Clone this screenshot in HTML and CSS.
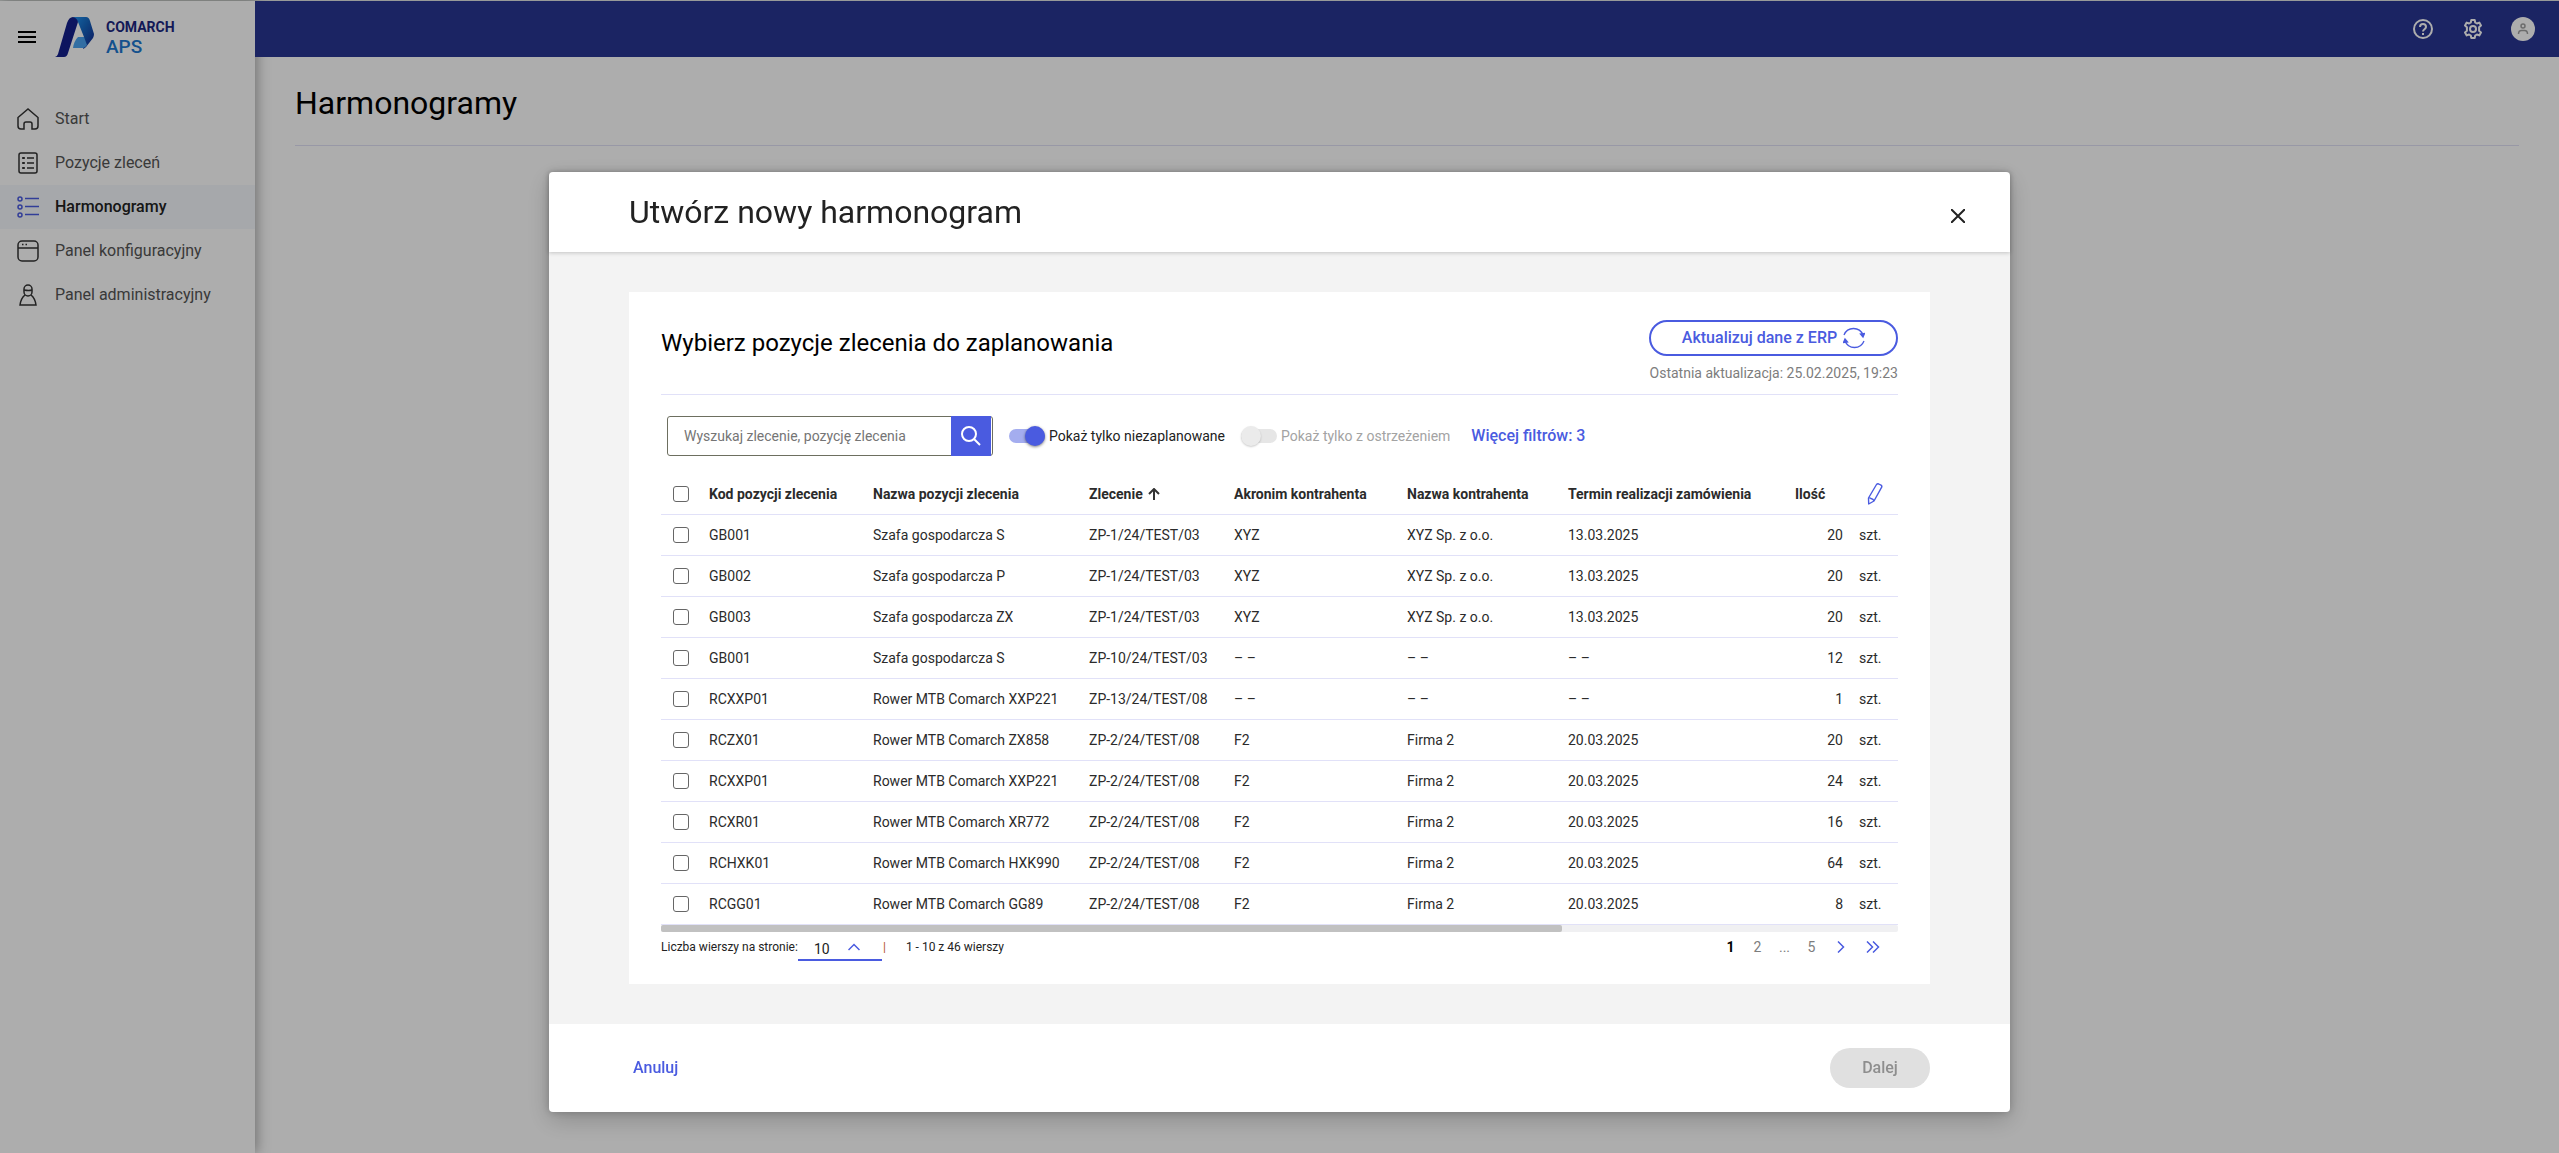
FILE: index.html
```html
<!DOCTYPE html>
<html lang="pl">
<head>
<meta charset="utf-8">
<meta name="viewport" content="width=device-width, initial-scale=1">
<title>Comarch APS – Harmonogramy</title>
<link rel="stylesheet" href="styles.css">
</head>
<body>
<div class="app">
  <aside class="sidebar">
    <div class="brand">
      <button class="icon-button" type="button" aria-label="Menu">
        <svg width="18" height="12" viewBox="0 0 18 12"><path d="M0 1h18M0 6h18M0 11h18" stroke="#000" stroke-width="2"/></svg>
      </button>
      <svg class="brand-mark" width="40" height="40" viewBox="0 0 40 40">
        <defs><linearGradient id="band" x1="0" y1="0" x2="1" y2="1"><stop offset="0" stop-color="#2196f3"/><stop offset=".45" stop-color="#1565c0"/><stop offset="1" stop-color="#14248c"/></linearGradient></defs>
        <path d="M18 0h13q3 0 4 4l4 13q0 2-1 4l-7 9q-1 1-3 2l1-12-6-15z" fill="url(#band)"/>
        <path d="M23 20h6l3 8q-2 3-4 3H18q1-7 5-11z" fill="#4aa3f0"/>
        <path d="M18 0q-4 0-6 6L3 37q-1 3-3 3h9q3 0 4-4l10-31Q22 1 18 0z" fill="#14208c"/>
      </svg>
      <div class="brand-name"><span class="brand-company">COMARCH</span><span class="brand-product">APS</span></div>
    </div>
    <nav class="menu">
      <a class="menu-item" href="#start">
        <svg class="menu-icon" viewBox="0 0 22 22"><path d="M1 9.500 11 1l10 8.500V18q0 3-3 3h-3v-5q0-2-2-2H9q-2 0-2 2v5H4q-3 0-3-3z"/></svg>Start</a>
      <a class="menu-item" href="#pozycje">
        <svg class="menu-icon" viewBox="0 0 22 22"><rect x="2" y="1" width="18" height="20" rx="2"/><path d="M10 6h7M10 11h7M10 16h7M5 6h3M5 11h3M5 16h3"/><path d="M6.500 5v2M6.500 10v2M6.500 15v2"/></svg>Pozycje zleceń</a>
      <a class="menu-item menu-item-active" href="#harmonogramy" aria-current="page">
        <svg class="menu-icon" viewBox="0 0 22 22"><circle cx="3" cy="3" r="2"/><circle cx="3" cy="11" r="2"/><circle cx="3" cy="19" r="2"/><path d="M8 2.500h14M8 10.500h14M8 18.500h14"/></svg>Harmonogramy</a>
      <a class="menu-item" href="#konfiguracja">
        <svg class="menu-icon" viewBox="0 0 22 22"><rect x="1" y="1" width="20" height="20" rx="4"/><path d="M1 8h20M5 4.500h1.500M8.500 4.500H10"/></svg>Panel konfiguracyjny</a>
      <a class="menu-item" href="#administracja">
        <svg class="menu-icon" viewBox="0 0 22 22"><rect x="7" y="1" width="8" height="11" rx="4"/><path d="M7 6q5 1 8 0M8 11q-4 3-5 10h16q-1-7-5-10"/></svg>Panel administracyjny</a>
    </nav>
  </aside>
  <div class="main">
    <header class="topbar">
      <button class="icon-button" type="button" aria-label="Pomoc">
        <svg width="20" height="20" viewBox="0 0 20 20" fill="none" stroke="#fff" stroke-width="2"><circle cx="10" cy="10" r="9"/><path d="M7 8q0-3 3-3t3 3q0 1-1.500 2.200T10 12.500"/><path d="M10 14v2"/></svg>
      </button>
      <button class="icon-button" type="button" aria-label="Ustawienia">
        <svg width="20" height="20" viewBox="0 0 20 20" fill="none" stroke="#fff" stroke-width="2" stroke-linejoin="round"><circle cx="10" cy="10" r="3"/><path d="M8.300 1h3.400l.5 2.500 1.700 1 2.400-.9L18 6.500l-1.900 1.700v3.600L18 13.500l-1.700 2.900-2.400-.9-1.700 1-.5 2.500H8.300l-.5-2.500-1.700-1-2.400.9L2 13.500l1.900-1.700V8.200L2 6.500l1.700-2.900 2.400.9 1.700-1z"/></svg>
      </button>
      <button class="icon-button avatar" type="button" aria-label="Konto">
        <svg width="12" height="12" viewBox="0 0 12 12" fill="none" stroke="#a0a0a0" stroke-width="1.500"><circle cx="6" cy="3" r="2"/><path d="M1.500 11q0-3.500 3-3.500h3q3 0 3 3.500"/></svg>
      </button>
    </header>
    <main class="content"><h1 class="page-title">Harmonogramy</h1></main>
  </div>
</div>

<div class="overlay">
  <section class="dialog" role="dialog" aria-modal="true" aria-labelledby="dialog-title">
    <header class="dialog-header">
      <h2 class="dialog-title" id="dialog-title">Utwórz nowy harmonogram</h2>
      <button class="icon-button dialog-close" type="button" aria-label="Zamknij">
        <svg width="14" height="14" viewBox="0 0 14 14"><path d="m0 0 14 14M14 0 0 14" stroke="#222" stroke-width="2"/></svg>
      </button>
    </header>
    <div class="dialog-body">
      <div class="card">
        <div class="card-header">
          <h3 class="card-title">Wybierz pozycje zlecenia do zaplanowania</h3>
          <div class="sync">
            <button class="sync-button" type="button">Aktualizuj dane z ERP
              <svg width="22" height="22" viewBox="0 0 22 22" fill="none" stroke="#4a5be0" stroke-width="1.300"><path d="M1 8a10.200 10.200 0 0 1 19 0M21 14a10.200 10.200 0 0 1-19 0"/><path d="m17.500 7 2.500 3 1.500-3.500zM4.500 15 2 12l-1.500 3.500z" fill="#4a5be0"/></svg>
            </button>
            <p class="sync-info">Ostatnia aktualizacja: 25.02.2025, 19:23</p>
          </div>
        </div>
        <div class="filters">
          <form class="search">
            <input class="search-input" type="text" placeholder="Wyszukaj zlecenie, pozycję zlecenia" aria-label="Wyszukaj zlecenie, pozycję zlecenia">
            <button class="search-button" type="button" aria-label="Szukaj">
              <svg width="20" height="20" viewBox="0 0 20 20" fill="none" stroke="#fff" stroke-width="2"><circle cx="8" cy="8" r="7"/><path d="m13 13 6 6"/></svg>
            </button>
          </form>
          <label class="toggle"><input class="switch" type="checkbox" role="switch" checked>Pokaż tylko niezaplanowane</label>
          <label class="toggle toggle-disabled"><input class="switch" type="checkbox" role="switch" disabled>Pokaż tylko z ostrzeżeniem</label>
          <button class="link-button" type="button">Więcej filtrów: 3</button>
        </div>
        <table class="orders">
          <colgroup><col class="col-check"><col class="col-code"><col class="col-name"><col class="col-order"><col class="col-acronym"><col class="col-client"><col class="col-date"><col class="col-amount"><col class="col-unit"></colgroup>
          <thead>
            <tr>
              <th class="check"><input class="box" type="checkbox" aria-label="Zaznacz wszystkie"></th>
              <th>Kod pozycji zlecenia</th><th>Nazwa pozycji zlecenia</th>
              <th aria-sort="ascending">Zlecenie <svg class="sort" width="12" height="12" viewBox="0 0 12 12" fill="none" stroke="#333" stroke-width="2"><path d="M6 12V1M1 6l5-5 5 5"/></svg></th>
              <th>Akronim kontrahenta</th><th>Nazwa kontrahenta</th><th>Termin realizacji zamówienia</th><th>Ilość</th>
              <th class="edit"><button class="icon-button" type="button" aria-label="Edytuj kolumny"><svg width="16" height="22" viewBox="0 0 16 22" fill="none" stroke="#4a5be0" stroke-width="1.400" stroke-linejoin="round"><path d="M9.500 1.500q1-1 2.200-.5l2.300 1.200q1.200.8.700 2L7 18l-5.300 3-.2-6zM1.500 15q2-.5 2.800.8Q6 15.500 7 18"/></svg></button></th>
            </tr>
          </thead>
          <tbody>
            <tr><td class="check"><input class="box" type="checkbox" aria-label="Zaznacz GB001"></td><td>GB001</td><td>Szafa gospodarcza S</td><td>ZP-1/24/TEST/03</td><td>XYZ</td><td>XYZ Sp. z o.o.</td><td>13.03.2025</td><td class="amount">20</td><td>szt.</td></tr>
            <tr><td class="check"><input class="box" type="checkbox" aria-label="Zaznacz GB002"></td><td>GB002</td><td>Szafa gospodarcza P</td><td>ZP-1/24/TEST/03</td><td>XYZ</td><td>XYZ Sp. z o.o.</td><td>13.03.2025</td><td class="amount">20</td><td>szt.</td></tr>
            <tr><td class="check"><input class="box" type="checkbox" aria-label="Zaznacz GB003"></td><td>GB003</td><td>Szafa gospodarcza ZX</td><td>ZP-1/24/TEST/03</td><td>XYZ</td><td>XYZ Sp. z o.o.</td><td>13.03.2025</td><td class="amount">20</td><td>szt.</td></tr>
            <tr><td class="check"><input class="box" type="checkbox" aria-label="Zaznacz GB001"></td><td>GB001</td><td>Szafa gospodarcza S</td><td>ZP-10/24/TEST/03</td><td>– –</td><td>– –</td><td>– –</td><td class="amount">12</td><td>szt.</td></tr>
            <tr><td class="check"><input class="box" type="checkbox" aria-label="Zaznacz RCXXP01"></td><td>RCXXP01</td><td>Rower MTB Comarch XXP221</td><td>ZP-13/24/TEST/08</td><td>– –</td><td>– –</td><td>– –</td><td class="amount">1</td><td>szt.</td></tr>
            <tr><td class="check"><input class="box" type="checkbox" aria-label="Zaznacz RCZX01"></td><td>RCZX01</td><td>Rower MTB Comarch ZX858</td><td>ZP-2/24/TEST/08</td><td>F2</td><td>Firma 2</td><td>20.03.2025</td><td class="amount">20</td><td>szt.</td></tr>
            <tr><td class="check"><input class="box" type="checkbox" aria-label="Zaznacz RCXXP01"></td><td>RCXXP01</td><td>Rower MTB Comarch XXP221</td><td>ZP-2/24/TEST/08</td><td>F2</td><td>Firma 2</td><td>20.03.2025</td><td class="amount">24</td><td>szt.</td></tr>
            <tr><td class="check"><input class="box" type="checkbox" aria-label="Zaznacz RCXR01"></td><td>RCXR01</td><td>Rower MTB Comarch XR772</td><td>ZP-2/24/TEST/08</td><td>F2</td><td>Firma 2</td><td>20.03.2025</td><td class="amount">16</td><td>szt.</td></tr>
            <tr><td class="check"><input class="box" type="checkbox" aria-label="Zaznacz RCHXK01"></td><td>RCHXK01</td><td>Rower MTB Comarch HXK990</td><td>ZP-2/24/TEST/08</td><td>F2</td><td>Firma 2</td><td>20.03.2025</td><td class="amount">64</td><td>szt.</td></tr>
            <tr><td class="check"><input class="box" type="checkbox" aria-label="Zaznacz RCGG01"></td><td>RCGG01</td><td>Rower MTB Comarch GG89</td><td>ZP-2/24/TEST/08</td><td>F2</td><td>Firma 2</td><td>20.03.2025</td><td class="amount">8</td><td>szt.</td></tr>
          </tbody>
        </table>
        <div class="scrollbar"><div class="scrollbar-thumb"></div></div>
        <div class="pager">
          <label class="pager-label" for="page-size">Liczba wierszy na stronie:</label>
          <div class="page-size">
            <select class="page-size-select" id="page-size"><option>10</option><option>20</option><option>50</option></select>
            <svg class="page-size-arrow" width="12" height="8" viewBox="0 0 12 8" fill="none" stroke="#4a5be0" stroke-width="1.500"><path d="m.5 7 5.500-5.500L11.500 7"/></svg>
          </div>
          <span class="pager-divider">|</span>
          <span class="pager-range">1 - 10 z 46 wierszy</span>
          <nav class="pages" aria-label="Strony">
            <a class="page page-current" href="#1" aria-current="page">1</a>
            <a class="page" href="#2">2</a>
            <span class="page">...</span>
            <a class="page" href="#5">5</a>
            <a class="page page-arrow" href="#next" aria-label="Następna"><svg width="8" height="12" viewBox="0 0 8 12" fill="none" stroke="#4a5be0" stroke-width="1.500"><path d="m1 .5 5.500 5.500L1 11.500"/></svg></a>
            <a class="page page-arrow" href="#last" aria-label="Ostatnia"><svg width="14" height="12" viewBox="0 0 14 12" fill="none" stroke="#4a5be0" stroke-width="1.500"><path d="m1 .5 5.500 5.500L1 11.500M7 .5 12.500 6 7 11.500"/></svg></a>
          </nav>
        </div>
      </div>
    </div>
    <footer class="dialog-footer">
      <button class="link-button" type="button">Anuluj</button>
      <button class="next-button" type="button" disabled>Dalej</button>
    </footer>
  </section>
</div>
</body>
</html>
```
FILE: styles.css
```css
*,
*::before,
*::after {
  box-sizing: border-box;
}

body {
  margin: 0;
  font-family: Roboto, "Liberation Sans", sans-serif;
  font-size: 14px;
  line-height: 20px;
  color: #2b2b2b;
  background: #fff;
}

h1, h2, h3, p {
  margin: 0;
  font-weight: 400;
}

svg {
  display: block;
  flex: none;
}

button, input, select {
  font: inherit;
  color: inherit;
}

button {
  padding: 0;
  border: 0;
  background: none;
  cursor: pointer;
}

.icon-button {
  display: flex;
  align-items: center;
  justify-content: center;
}

/* Application frame */
.app {
  display: flex;
  min-height: 100vh;
  border-top: 1px solid #e0e4e2;
}

.sidebar {
  flex: 0 0 255px;
  background: #fff;
  box-shadow: 2px 0 12px rgba(0, 0, 0, 0.35);
}

.brand {
  display: flex;
  align-items: center;
  padding: 16px 18px 0;
}

.brand-mark {
  margin: 0 11px 0 19px;
}

.brand-name {
  display: flex;
  flex-direction: column;
  font-weight: 700;
}

.brand-company {
  font-size: 14px;
  line-height: 20px;
  color: #1c2780;
}

.brand-product {
  font-size: 19px;
  line-height: 20px;
  font-weight: 500;
  color: #1e78d0;
}

.menu {
  display: flex;
  flex-direction: column;
  padding-top: 40px;
}

.menu-item {
  display: flex;
  align-items: center;
  gap: 16px;
  height: 44px;
  padding: 0 17px;
  font-size: 16px;
  color: #555;
  text-decoration: none;
}

.menu-item-active {
  font-weight: 500;
  color: #222;
  background: #f5f8fc;
}

.menu-icon {
  width: 22px;
  height: 22px;
  fill: none;
  stroke: #333;
  stroke-width: 1.5;
}

.menu-item-active .menu-icon {
  stroke: #4a5be0;
}

.main {
  flex: 1;
}

.topbar {
  position: relative;
  display: flex;
  align-items: center;
  justify-content: flex-end;
  gap: 26px;
  height: 56px;
  padding: 0 24px;
  background: #283593;
}

.topbar .icon-button {
  width: 24px;
  height: 24px;
}

.avatar {
  border-radius: 50%;
  background: #fff;
}

.content {
  padding: 0 40px;
}

.page-title {
  padding: 26px 0 22px;
  font-size: 32px;
  line-height: 40px;
  color: #000;
  border-bottom: 1px solid #e1e1f5;
}

/* Dialog */
.overlay {
  position: fixed;
  inset: 0;
  overflow: auto;
  padding: 172px 32px 40px;
  background: rgba(0, 0, 0, 0.32);
}

.dialog {
  max-width: 1461px;
  margin: 0 auto;
  border-radius: 4px;
  background: #fff;
  box-shadow: 0 8px 24px rgba(0, 0, 0, 0.2), 0 0 8px rgba(0, 0, 0, 0.2);
}

.dialog-header {
  position: relative;
  display: flex;
  justify-content: space-between;
  padding: 20px 28px 12px 80px;
  box-shadow: 0 1px 4px rgba(0, 0, 0, 0.2);
}

.dialog-title {
  font-size: 32px;
  line-height: 40px;
  color: #222;
}

.dialog-close {
  width: 48px;
  height: 48px;
}

.dialog-body {
  padding: 40px 80px;
  background: #f3f3f3;
}

.card {
  padding: 28px 32px 16px;
  background: #fff;
}

.card-header {
  display: flex;
  justify-content: space-between;
  padding-bottom: 11px;
  border-bottom: 1px solid #e1e1f8;
}

.card-title {
  font-size: 24px;
  line-height: 46px;
  color: #000;
}

.sync {
  min-width: 249px;
}

.sync-button {
  display: flex;
  align-items: center;
  justify-content: center;
  gap: 6px;
  width: 100%;
  height: 36px;
  border: 2px solid #4a5be0;
  border-radius: 18px;
  font-size: 16px;
  font-weight: 500;
  color: #4a5be0;
}

.sync-info {
  padding-top: 7px;
  text-align: right;
  color: #7d7d7d;
}

.filters {
  display: flex;
  align-items: center;
  padding: 21px 6px 17px;
}

.search {
  display: flex;
  width: 326px;
  height: 40px;
  padding-right: 1px;
  border: 1px solid #6d6f60;
  border-radius: 3px;
}

.search-input {
  flex: 1;
  min-width: 0;
  padding: 0 16px;
  border: 0;
  outline: 0;
  background: none;
}

.search-input::placeholder {
  color: #757575;
}

.search-button {
  display: flex;
  align-items: center;
  justify-content: center;
  width: 40px;
  margin: -1px 0;
  background: #4a5be0;
}

.toggle {
  display: flex;
  align-items: center;
  gap: 4px;
  margin-left: 16px;
  color: #222;
}

.toggle-disabled {
  color: #a3a3a3;
}

.switch {
  appearance: none;
  display: flex;
  align-items: center;
  width: 36px;
  height: 14px;
  margin: 0;
  border-radius: 7px;
  background: #e6e6e6;
}

.switch::before {
  content: "";
  width: 20px;
  height: 20px;
  border-radius: 50%;
  background: #ebebeb;
  box-shadow: 0 1px 2px rgba(0, 0, 0, 0.2);
}

.switch:checked {
  justify-content: flex-end;
  background: #a4adef;
}

.switch:checked::before {
  background: #4a5be0;
  box-shadow: 0 1px 3px rgba(0, 0, 0, 0.5);
}

.link-button {
  font-size: 16px;
  font-weight: 500;
  color: #4a5be0;
}

.filters .link-button {
  margin-left: 21px;
}

/* Orders table */
.orders {
  width: 100%;
  table-layout: fixed;
  border-collapse: separate;
  border-spacing: 0;
  white-space: nowrap;
}

.col-check { width: 32px; }
.col-code { width: 164px; }
.col-name { width: 216px; }
.col-order { width: 145px; }
.col-acronym { width: 173px; }
.col-client { width: 161px; }
.col-date { width: 227px; }
.col-amount { width: 64px; }

.orders th,
.orders td {
  height: 41px;
  padding: 0 0 0 16px;
  text-align: left;
  border-bottom: 1px solid #e1e1f8;
}

.orders th {
  height: 42px;
  font-weight: 700;
}

.orders .check {
  padding-left: 12px;
}

.orders .amount {
  text-align: right;
}

.orders .edit {
  padding-left: 24px;
}

.box {
  appearance: none;
  display: block;
  width: 16px;
  height: 16px;
  margin: 0;
  border: 1px solid #666;
  border-radius: 3px;
  background: #fff;
}

.sort {
  display: inline-block;
  margin-left: 2px;
  vertical-align: -1px;
}

.scrollbar {
  height: 7px;
  border-radius: 2px;
  background: #f0f0f2;
}

.scrollbar-thumb {
  width: 72.8%;
  height: 100%;
  border-radius: 2px;
  background: #c1c1c1;
}

/* Pagination */
.pager {
  display: flex;
  align-items: flex-start;
  height: 36px;
  padding-top: 3px;
  font-size: 12px;
  color: #222;
}

.pager-label,
.pager-divider,
.pager-range,
.pages {
  padding-top: 2px;
}

.page-size {
  position: relative;
  width: 84px;
}

.page-size-select {
  appearance: none;
  display: block;
  width: 100%;
  height: 26px;
  padding: 3px 16px 0;
  border: 0;
  border-bottom: 2px solid #4a5be0;
  border-radius: 0;
  background: none;
  font-size: 14px;
}

.page-size-arrow {
  position: absolute;
  top: 8px;
  right: 22px;
  pointer-events: none;
}

.pager-divider {
  width: 24px;
  padding-left: 1px;
  color: #b5532a;
}

.pages {
  display: flex;
  align-items: center;
  margin-left: auto;
  padding-right: 9px;
  font-size: 14px;
}

.page {
  display: flex;
  justify-content: center;
  width: 27px;
  color: #7d7d7d;
  text-decoration: none;
}

.page-current {
  font-weight: 700;
  color: #000;
}

.page-arrow {
  width: 32px;
}

.dialog-footer {
  display: flex;
  align-items: center;
  justify-content: space-between;
  padding: 24px 80px 24px 84px;
}

.next-button {
  width: 100px;
  height: 40px;
  border-radius: 20px;
  background: #e0e0e0;
  font-size: 16px;
  font-weight: 500;
  color: #8e8e8e;
}
```
